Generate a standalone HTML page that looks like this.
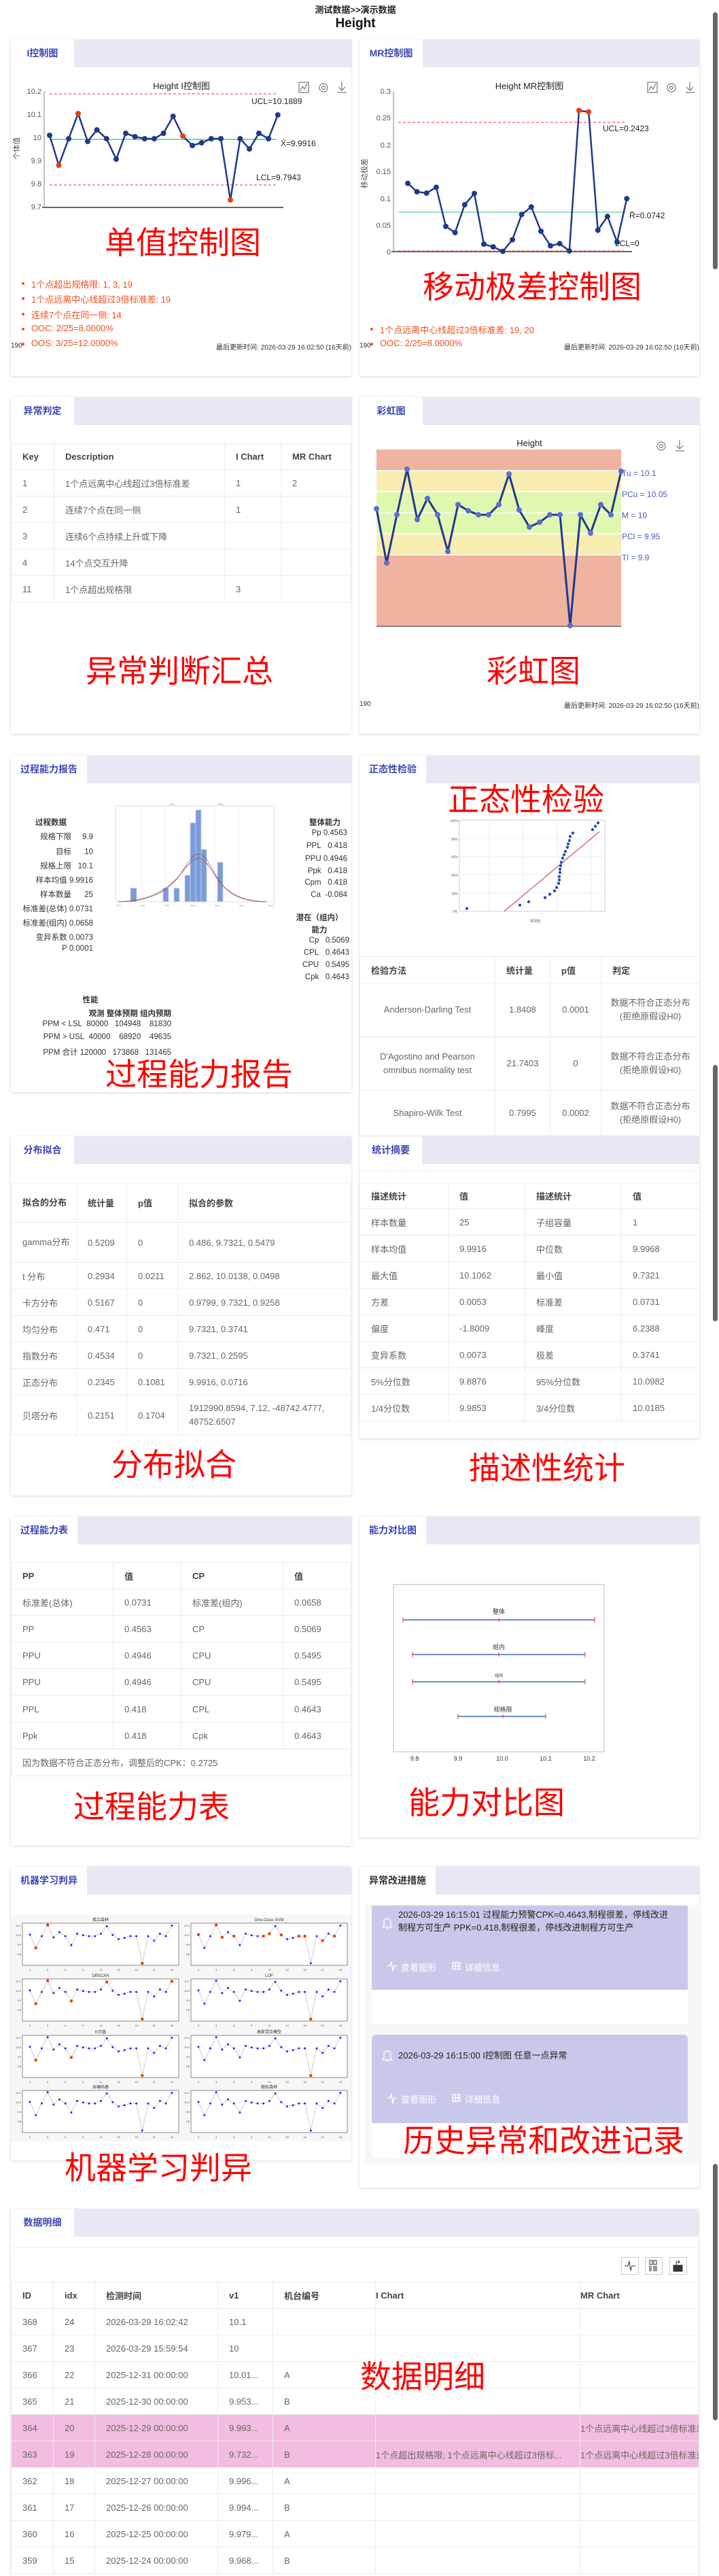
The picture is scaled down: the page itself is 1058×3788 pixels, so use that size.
<!DOCTYPE html>
<html><head><meta charset="utf-8">
<style>
*{box-sizing:border-box;margin:0;padding:0}
body{width:1058px;height:3783px;position:relative;overflow:hidden;background:#fff;font-family:"Liberation Sans","Noto Sans CJK SC",sans-serif;color:#555;font-size:13px}
.a{position:absolute}
.panel{position:absolute;background:#fff;box-shadow:0 1px 4px rgba(0,0,0,.16)}
.tabbar{position:absolute;left:0;top:0;right:0;height:41px;background:#e8e8f4}
.tab{position:absolute;left:0;top:0;height:41px;line-height:41px;background:#fff;font-weight:bold;color:#3c46b4;font-size:14px;text-align:center}
table{position:absolute;border-collapse:collapse;table-layout:fixed;font-size:13px;color:#666}
td,th{border:1px solid #ececec;padding:0 0 0 16px;text-align:left;vertical-align:middle;font-weight:normal;overflow:hidden;white-space:nowrap}
th{font-weight:bold;color:#444}
.red{position:absolute;color:#f00;font-size:46px;line-height:46px;white-space:nowrap;font-family:"Liberation Sans","Noto Sans CJK SC",sans-serif}
.bl{position:absolute;color:#f0501e;font-size:13px;white-space:nowrap}
.bl:before{content:"";position:absolute;left:-14px;top:7px;width:4px;height:4px;border-radius:2px;background:#f0501e}
.sm{position:absolute;font-size:10px;color:#333;white-space:nowrap}
.cr td{text-align:center;padding:0 6px;white-space:normal;line-height:20px}
.pr{position:absolute;font-size:11.5px;color:#333;white-space:nowrap;text-align:right}
.card{position:absolute;left:547px;width:465px;background:#c8c9ea}
.ct{position:absolute;left:39px;font-size:13px;color:#222;line-height:19px;width:410px}
.lk{position:absolute;font-size:13px;color:#eef;font-weight:bold}
.pink td{background:#f2bde0}
</style></head><body>

<div class="a" style="left:0;width:1046px;top:4px;text-align:center;font-weight:bold;font-size:13px;color:#222">测试数据&gt;&gt;演示数据</div>
<div class="a" style="left:0;width:1046px;top:24px;text-align:center;font-weight:bold;font-size:19px;color:#111">Height</div>

<!-- scrollbar -->
<div class="a" style="left:1049px;top:18px;width:7px;height:378px;background:#666;border-radius:4px"></div>
<div class="a" style="left:1049px;top:1566px;width:7px;height:377px;background:#666;border-radius:4px"></div>
<div class="a" style="left:1049px;top:3182px;width:7px;height:377px;background:#666;border-radius:4px"></div>

<!-- Row 1 -->
<div class="panel" style="left:16px;top:58px;width:501px;height:495px"><div class="tabbar"></div><div class="tab" style="width:93px">I控制图</div></div>
<div class="panel" style="left:529px;top:58px;width:500px;height:495px"><div class="tabbar"></div><div class="tab" style="width:93px">MR控制图</div></div>
<div class="bl" style="left:46px;top:408px">1个点超出规格限: 1, 3, 19</div>
<div class="bl" style="left:46px;top:430px">1个点远离中心线超过3倍标准差: 19</div>
<div class="bl" style="left:46px;top:453px">连续7个点在同一侧: 14</div>
<div class="bl" style="left:46px;top:475px">OOC: 2/25=8.0000%</div>
<div class="bl" style="left:46px;top:497px">OOS: 3/25=12.0000%</div>
<div class="sm" style="left:16px;top:503px">190</div>
<div class="sm" style="left:300px;width:217px;text-align:right;top:502px">最后更新时间: 2026-03-29 16:02:50 (16天前)</div>
<div class="bl" style="left:559px;top:475px">1个点远离中心线超过3倍标准差: 19, 20</div>
<div class="bl" style="left:559px;top:497px">OOC: 2/25=8.0000%</div>
<div class="sm" style="left:529px;top:503px">190</div>
<div class="sm" style="left:812px;width:217px;text-align:right;top:502px">最后更新时间: 2026-03-29 16:02:50 (16天前)</div>

<!-- Row 2 -->
<div class="panel" style="left:16px;top:584px;width:501px;height:495px"><div class="tabbar"></div><div class="tab" style="width:93px">异常判定</div></div>
<div class="panel" style="left:529px;top:584px;width:500px;height:495px"><div class="tabbar"></div><div class="tab" style="width:93px">彩虹图</div></div>
<table style="left:16px;top:652px;width:500px">
<colgroup><col style="width:63px"><col style="width:251px"><col style="width:83px"><col style="width:103px"></colgroup>
<tr style="height:38px"><th>Key</th><th>Description</th><th>I Chart</th><th>MR Chart</th></tr>
<tr style="height:39px"><td>1</td><td>1个点远离中心线超过3倍标准差</td><td>1</td><td>2</td></tr>
<tr style="height:39px"><td>2</td><td>连续7个点在同一侧</td><td>1</td><td></td></tr>
<tr style="height:39px"><td>3</td><td>连续6个点持续上升或下降</td><td></td><td></td></tr>
<tr style="height:39px"><td>4</td><td>14个点交互升降</td><td></td><td></td></tr>
<tr style="height:39px"><td>11</td><td>1个点超出规格限</td><td>3</td><td></td></tr>
</table>
<div class="sm" style="left:529px;top:1030px">190</div>
<div class="sm" style="left:812px;width:217px;text-align:right;top:1029px">最后更新时间: 2026-03-29 16:02:50 (16天前)</div>

<!-- Row 3 -->
<div class="panel" style="left:16px;top:1111px;width:501px;height:495px"><div class="tabbar"></div><div class="tab" style="width:112px">过程能力报告</div></div>
<div class="panel" style="left:529px;top:1111px;width:500px;height:560px"><div class="tabbar"></div><div class="tab" style="width:98px">正态性检验</div></div>

<div class="pr" style="left:40px;width:70px;top:1201px;text-align:center;font-weight:bold">过程数据</div>
<div class="pr" style="left:20px;width:117px;top:1222px">规格下限&nbsp;&nbsp;&nbsp;&nbsp; 9.9</div>
<div class="pr" style="left:20px;width:117px;top:1244px">目标&nbsp;&nbsp;&nbsp;&nbsp;&nbsp; 10</div>
<div class="pr" style="left:20px;width:117px;top:1265px">规格上限&nbsp;&nbsp; 10.1</div>
<div class="pr" style="left:20px;width:117px;top:1286px">样本均值 9.9916</div>
<div class="pr" style="left:20px;width:117px;top:1307px">样本数量&nbsp;&nbsp;&nbsp;&nbsp;&nbsp; 25</div>
<div class="pr" style="left:20px;width:117px;top:1328px">标准差(总体) 0.0731</div>
<div class="pr" style="left:20px;width:117px;top:1349px">标准差(组内) 0.0658</div>
<div class="pr" style="left:20px;width:117px;top:1370px">变异系数 0.0073</div>
<div class="pr" style="left:20px;width:117px;top:1389px">P 0.0001</div>

<div class="pr" style="left:445px;width:66px;top:1201px;text-align:center;font-weight:bold">整体能力</div>
<div class="pr" style="left:420px;width:91px;top:1219px">Pp 0.4563</div>
<div class="pr" style="left:420px;width:91px;top:1238px">PPL&nbsp;&nbsp; 0.418</div>
<div class="pr" style="left:420px;width:91px;top:1257px">PPU 0.4946</div>
<div class="pr" style="left:420px;width:91px;top:1275px">Ppk&nbsp;&nbsp; 0.418</div>
<div class="pr" style="left:420px;width:91px;top:1292px">Cpm&nbsp;&nbsp; 0.418</div>
<div class="pr" style="left:420px;width:91px;top:1310px">Ca&nbsp; -0.084</div>
<div class="pr" style="left:430px;width:80px;top:1341px;text-align:center;font-weight:bold">潜在（组内）</div>
<div class="pr" style="left:430px;width:80px;top:1359px;text-align:center;font-weight:bold">能力</div>
<div class="pr" style="left:420px;width:94px;top:1377px">Cp&nbsp;&nbsp; 0.5069</div>
<div class="pr" style="left:420px;width:94px;top:1395px">CPL&nbsp;&nbsp; 0.4643</div>
<div class="pr" style="left:420px;width:94px;top:1413px">CPU&nbsp;&nbsp; 0.5495</div>
<div class="pr" style="left:420px;width:94px;top:1431px">Cpk&nbsp;&nbsp; 0.4643</div>

<div class="pr" style="left:118px;width:30px;top:1462px;text-align:center;font-weight:bold">性能</div>
<div class="pr" style="left:120px;width:132px;top:1482px;font-weight:bold">观测 整体预期 组内预期</div>
<div class="pr" style="left:36px;width:216px;top:1500px">PPM &lt; LSL&nbsp; 80000&nbsp;&nbsp; 104948&nbsp;&nbsp;&nbsp; 81830</div>
<div class="pr" style="left:36px;width:216px;top:1519px">PPM &gt; USL&nbsp; 40000&nbsp;&nbsp;&nbsp; 68920&nbsp;&nbsp;&nbsp; 49635</div>
<div class="pr" style="left:36px;width:216px;top:1539px">PPM 合计 120000&nbsp;&nbsp; 173868&nbsp;&nbsp; 131465</div>

<table class="cr" style="left:529px;top:1406px;width:500px">
<colgroup><col style="width:199px"><col style="width:81px"><col style="width:75px"><col style="width:145px"></colgroup>
<tr style="height:39px"><th style="padding-left:16px;text-align:left">检验方法</th><th style="padding-left:16px;text-align:left">统计量</th><th style="padding-left:16px;text-align:left">p值</th><th style="padding-left:16px;text-align:left">判定</th></tr>
<tr style="height:79px"><td>Anderson-Darling Test</td><td>1.8408</td><td>0.0001</td><td>数据不符合正态分布 (拒绝原假设H0)</td></tr>
<tr style="height:79px"><td>D'Agostino and Pearson omnibus normality test</td><td>21.7403</td><td>0</td><td>数据不符合正态分布 (拒绝原假设H0)</td></tr>
<tr style="height:67px"><td>Shapiro-Wilk Test</td><td>0.7995</td><td>0.0002</td><td>数据不符合正态分布 (拒绝原假设H0)</td></tr>
</table>

<!-- Row 4 -->
<div class="panel" style="left:16px;top:1671px;width:501px;height:528px"><div class="tabbar"></div><div class="tab" style="width:93px">分布拟合</div></div>
<div class="panel" style="left:529px;top:1671px;width:500px;height:444px"><div class="tabbar"></div><div class="tab" style="width:92px">统计摘要</div><div class="a" style="left:0;right:0;top:50px;border-top:1px solid #ececec"></div></div>
<table style="left:16px;top:1739px;width:500px">
<colgroup><col style="width:96px"><col style="width:74px"><col style="width:75px"><col style="width:255px"></colgroup>
<tr style="height:58px"><th style="white-space:normal;line-height:20px">拟合的分布</th><th>统计量</th><th>p值</th><th>拟合的参数</th></tr>
<tr style="height:59px"><td style="white-space:normal;line-height:20px">gamma分布</td><td>0.5209</td><td>0</td><td>0.486, 9.7321, 0.5479</td></tr>
<tr style="height:39px"><td>t 分布</td><td>0.2934</td><td>0.0211</td><td>2.862, 10.0138, 0.0498</td></tr>
<tr style="height:39px"><td>卡方分布</td><td>0.5167</td><td>0</td><td>0.9799, 9.7321, 0.9258</td></tr>
<tr style="height:39px"><td>均匀分布</td><td>0.471</td><td>0</td><td>9.7321, 0.3741</td></tr>
<tr style="height:39px"><td>指数分布</td><td>0.4534</td><td>0</td><td>9.7321, 0.2595</td></tr>
<tr style="height:39px"><td>正态分布</td><td>0.2345</td><td>0.1081</td><td>9.9916, 0.0716</td></tr>
<tr style="height:59px"><td>贝塔分布</td><td>0.2151</td><td>0.1704</td><td style="white-space:normal;line-height:20px">1912990.8594, 7.12, -48742.4777, 48752.6507</td></tr>
</table>
<table style="left:529px;top:1739px;width:500px">
<colgroup><col style="width:130px"><col style="width:113px"><col style="width:142px"><col style="width:115px"></colgroup>
<tr style="height:38px"><th>描述统计</th><th>值</th><th>描述统计</th><th>值</th></tr>
<tr style="height:39px"><td>样本数量</td><td>25</td><td>子组容量</td><td>1</td></tr>
<tr style="height:39px"><td>样本均值</td><td>9.9916</td><td>中位数</td><td>9.9968</td></tr>
<tr style="height:39px"><td>最大值</td><td>10.1062</td><td>最小值</td><td>9.7321</td></tr>
<tr style="height:39px"><td>方差</td><td>0.0053</td><td>标准差</td><td>0.0731</td></tr>
<tr style="height:39px"><td>偏度</td><td>-1.8009</td><td>峰度</td><td>6.2388</td></tr>
<tr style="height:39px"><td>变异系数</td><td>0.0073</td><td>极差</td><td>0.3741</td></tr>
<tr style="height:39px"><td>5%分位数</td><td>9.8876</td><td>95%分位数</td><td>10.0982</td></tr>
<tr style="height:39px"><td>1/4分位数</td><td>9.9853</td><td>3/4分位数</td><td>10.0185</td></tr>
</table>

<!-- Row 5 -->
<div class="panel" style="left:16px;top:2230px;width:501px;height:484px"><div class="tabbar"></div><div class="tab" style="width:98px">过程能力表</div></div>
<div class="panel" style="left:529px;top:2230px;width:500px;height:472px"><div class="tabbar"></div><div class="tab" style="width:98px">能力对比图</div></div>
<table style="left:16px;top:2297px;width:500px">
<colgroup><col style="width:150px"><col style="width:100px"><col style="width:150px"><col style="width:100px"></colgroup>
<tr style="height:39px"><th>PP</th><th>值</th><th>CP</th><th>值</th></tr>
<tr style="height:39px"><td>标准差(总体)</td><td>0.0731</td><td>标准差(组内)</td><td>0.0658</td></tr>
<tr style="height:39px"><td>PP</td><td>0.4563</td><td>CP</td><td>0.5069</td></tr>
<tr style="height:39px"><td>PPU</td><td>0.4946</td><td>CPU</td><td>0.5495</td></tr>
<tr style="height:40px"><td>PPU</td><td>0.4946</td><td>CPU</td><td>0.5495</td></tr>
<tr style="height:39px"><td>PPL</td><td>0.418</td><td>CPL</td><td>0.4643</td></tr>
<tr style="height:39px"><td>Ppk</td><td>0.418</td><td>Cpk</td><td>0.4643</td></tr>
<tr style="height:40px"><td colspan="4">因为数据不符合正态分布，调整后的CPK：0.2725</td></tr>
</table>

<!-- Row 6 -->
<div class="panel" style="left:16px;top:2745px;width:501px;height:432px"><div class="tabbar"></div><div class="tab" style="width:112px">机器学习判异</div></div>
<div class="panel" style="left:529px;top:2745px;width:500px;height:472px"><div class="tabbar"></div><div class="tab" style="width:112px;color:#333">异常改进措施</div></div>
<div class="a" style="left:16px;top:2816px;width:501px;height:333px;background:#f7f7f7"></div>
<div class="a" style="left:537px;top:2801px;width:491px;height:382px;background:#f7f7f7"></div>
<div class="a" style="left:547px;top:2926px;width:465px;height:50px;background:#fff"></div>
<div class="a" style="left:547px;top:3122px;width:465px;height:51px;background:#fff"></div>
<div class="card" style="top:2802px;height:124px">
<div class="ct" style="top:4px">2026-03-29 16:15:01 过程能力预警CPK=0.4643,制程很差，停线改进制程方可生产 PPK=0.418,制程很差，停线改进制程方可生产</div>
<div class="lk" style="left:43px;top:81px">查看图形</div><div class="lk" style="left:137px;top:81px">详细信息</div>
</div>
<div class="card" style="top:2992px;height:130px;border-radius:6px 6px 0 0">
<div class="ct" style="top:21px">2026-03-29 16:15:00 I控制图 任意一点异常</div>
<div class="lk" style="left:43px;top:85px">查看图形</div><div class="lk" style="left:137px;top:85px">详细信息</div>
</div>

<!-- Row 7 -->
<div class="panel" style="left:16px;top:3248px;width:1012px;height:540px"><div class="tabbar"></div><div class="tab" style="width:93px">数据明细</div><div class="a" style="left:0;right:0;top:57px;border-top:1px solid #ececec"></div></div>
<div class="a" style="left:914px;top:3319px;width:26px;height:26px;border:1px solid #ccc;background:#fff"></div>
<div class="a" style="left:949px;top:3319px;width:26px;height:26px;border:1px solid #ccc;background:#fff"></div>
<div class="a" style="left:985px;top:3319px;width:26px;height:26px;border:1px solid #ccc;background:#fff"></div>
<table style="left:16px;top:3355px;width:1012px">
<colgroup><col style="width:62px"><col style="width:61px"><col style="width:181px"><col style="width:81px"><col style="width:151px"><col style="width:301px"><col style="width:175px"></colgroup>
<tr style="height:39px"><th>ID</th><th>idx</th><th>检测时间</th><th>v1</th><th>机台编号</th><th style="padding-left:0">I Chart</th><th style="padding-left:0">MR Chart</th></tr>
<tr style="height:39px"><td>368</td><td>24</td><td>2026-03-29 16:02:42</td><td>10.1</td><td></td><td></td><td></td></tr>
<tr style="height:39px"><td>367</td><td>23</td><td>2026-03-29 15:59:54</td><td>10</td><td></td><td></td><td></td></tr>
<tr style="height:39px"><td>366</td><td>22</td><td>2025-12-31 00:00:00</td><td>10.01...</td><td>A</td><td></td><td></td></tr>
<tr style="height:39px"><td>365</td><td>21</td><td>2025-12-30 00:00:00</td><td>9.953...</td><td>B</td><td></td><td></td></tr>
<tr class="pink" style="height:39px"><td>364</td><td>20</td><td>2025-12-29 00:00:00</td><td>9.993...</td><td>A</td><td></td><td style="padding-left:0">1个点远离中心线超过3倍标准差</td></tr>
<tr class="pink" style="height:39px"><td>363</td><td>19</td><td>2025-12-28 00:00:00</td><td>9.732...</td><td>B</td><td style="padding-left:0">1个点超出规格限; 1个点远离中心线超过3倍标...</td><td style="padding-left:0">1个点远离中心线超过3倍标准差</td></tr>
<tr style="height:39px"><td>362</td><td>18</td><td>2025-12-27 00:00:00</td><td>9.996...</td><td>A</td><td></td><td></td></tr>
<tr style="height:39px"><td>361</td><td>17</td><td>2025-12-26 00:00:00</td><td>9.994...</td><td>B</td><td></td><td></td></tr>
<tr style="height:39px"><td>360</td><td>16</td><td>2025-12-25 00:00:00</td><td>9.979...</td><td>A</td><td></td><td></td></tr>
<tr style="height:39px"><td>359</td><td>15</td><td>2025-12-24 00:00:00</td><td>9.968...</td><td>B</td><td></td><td></td></tr>
</table>

<!-- Overlay graphics -->
<svg class="a" id="ov" style="left:0;top:0" width="1058" height="3783" font-family="Liberation Sans, Noto Sans CJK SC, sans-serif">
<!-- I chart -->
<g font-size="11" fill="#555">
<text x="267" y="131" text-anchor="middle" font-size="13" fill="#222">Height I控制图</text>
<text x="61" y="138" text-anchor="end">10.2</text><text x="61" y="172" text-anchor="end">10.1</text><text x="61" y="206" text-anchor="end">10</text><text x="61" y="240" text-anchor="end">9.9</text><text x="61" y="274" text-anchor="end">9.8</text><text x="61" y="308" text-anchor="end">9.7</text>
<text transform="translate(28,218) rotate(-90)" text-anchor="middle" font-size="11">个体值</text>
</g>
<line x1="65" y1="134" x2="65" y2="305" stroke="#888"/>
<line x1="62" y1="305" x2="417" y2="305" stroke="#666" stroke-width="2"/>
<line x1="73" y1="138" x2="407" y2="138" stroke="#e33" stroke-dasharray="4,3"/>
<line x1="73" y1="272" x2="407" y2="272" stroke="#e33" stroke-dasharray="4,3"/>
<line x1="73" y1="205" x2="407" y2="205" stroke="#7fd6a8" stroke-width="2"/>
<g font-size="12" fill="#222"><text x="370" y="153">UCL=10.1889</text><text x="413" y="215">X̄=9.9916</text><text x="377" y="265">LCL=9.7943</text></g>
<polyline id="ic" fill="none" stroke="#1f3a8a" stroke-width="2.5" points="73,199 86.5,243 101,204 115,167 129,208 142.6,191 156.8,204 171,234 185,196 198.6,201 212.8,204 227,204 240.5,196 254.7,171 269,200 283,214 296.6,210 310.8,204 325,204 339,294 353.4,204 367,219 381,196 395,204 408.8,169"/>
<!-- MR chart -->
<g font-size="11" fill="#555">
<text x="779" y="131" text-anchor="middle" font-size="13" fill="#222">Height MR控制图</text>
<text x="575" y="138" text-anchor="end">0.3</text><text x="575" y="177" text-anchor="end">0.25</text><text x="575" y="217" text-anchor="end">0.2</text><text x="575" y="256" text-anchor="end">0.15</text><text x="575" y="296" text-anchor="end">0.1</text><text x="575" y="335" text-anchor="end">0.05</text><text x="575" y="374" text-anchor="end">0</text>
<text transform="translate(540,255) rotate(-90)" text-anchor="middle" font-size="11">移动极差</text>
</g>
<line x1="579" y1="134" x2="579" y2="370" stroke="#888"/>
<line x1="576" y1="370" x2="930" y2="370" stroke="#666" stroke-width="2"/>
<line x1="586" y1="180" x2="920" y2="180" stroke="#e33" stroke-dasharray="4,3"/>
<line x1="586" y1="369" x2="920" y2="369" stroke="#e33" stroke-dasharray="4,3"/>
<line x1="586" y1="312" x2="920" y2="312" stroke="#7fd6a8" stroke-width="1.5"/>
<g font-size="12" fill="#222"><text x="887" y="193">UCL=0.2423</text><text x="926" y="321">R̄=0.0742</text><text x="905" y="362">LCL=0</text></g>
<polyline id="mc" fill="none" stroke="#1f3a8a" stroke-width="2.5" points="600,269.6 613.5,282 627.7,284 641.9,275.4 656,332.9 669.6,342 683.8,301 698,284.6 712,359 725.7,363 740,369.6 754,352.5 767.6,315.4 781.8,304.3 796,340 810,361.4 823.6,358.2 837.8,369 852,162.5 866.2,164.6 879.7,338.6 893.9,318.2 908,356 922.3,292.1"/>
<!-- chart icons -->
<g fill="none" stroke="#777" stroke-width="1.2">
<rect x="440" y="121" width="14" height="15"/><polyline points="442,133 445,127 448,131 452,123"/>
<circle cx="476" cy="129" r="6"/><circle cx="476" cy="129" r="2.5"/>
<path d="M503 120v13M498 128l5 5 5-5M497 136h13"/>
<rect x="953" y="121" width="14" height="15"/><polyline points="955,133 958,127 961,131 965,123"/>
<circle cx="988" cy="129" r="6"/><circle cx="988" cy="129" r="2.5"/>
<path d="M1015 120v13M1010 128l5 5 5-5M1009 136h13"/>
<circle cx="973" cy="656" r="6"/><circle cx="973" cy="656" r="2.5"/>
<path d="M1000 647v13M995 655l5 5 5-5M994 663h13"/>
</g>
<!-- Rainbow -->
<text x="779" y="656" text-anchor="middle" font-size="13" fill="#222">Height</text>
<rect x="554" y="661" width="360" height="31" fill="#efb3a0"/>
<rect x="554" y="692" width="360" height="31" fill="#f7edb0"/>
<rect x="554" y="723" width="360" height="62" fill="#e0f7b0"/>
<rect x="554" y="785" width="360" height="31" fill="#f7edb0"/>
<rect x="554" y="816" width="360" height="105" fill="#efb3a0"/>
<g stroke="#fff" stroke-width="1.5"><line x1="554" y1="692" x2="914" y2="692"/><line x1="554" y1="723" x2="914" y2="723"/><line x1="554" y1="754" x2="914" y2="754"/><line x1="554" y1="785" x2="914" y2="785"/><line x1="554" y1="816" x2="914" y2="816"/></g>
<line x1="554" y1="921" x2="914" y2="921" stroke="#666" stroke-width="1.5"/>
<g font-size="12" fill="#4a5fc1"><text x="915" y="700">Tu = 10.1</text><text x="915" y="731">PCu = 10.05</text><text x="915" y="762">M = 10</text><text x="915" y="793">PCl = 9.95</text><text x="915" y="824">Tl = 9.9</text></g>
<polyline id="rc" fill="none" stroke="#1f3a8a" stroke-width="3" points="554,748 569,828 584,757 599,690 614,764 629,733 644,757 659,811 674,742 689,751 704,757 719,757 734,742 749,697 764,750 779,775 794,768 809,757 824,757 839,920 854,757 869,784 884,742 899,757 914,693"/>
<!-- Histogram -->
<rect x="170" y="1185" width="233" height="141" fill="#fff" stroke="#ddd"/>
<g stroke="#eee"><line x1="207" y1="1185" x2="207" y2="1326"/><line x1="243" y1="1185" x2="243" y2="1326"/><line x1="280" y1="1185" x2="280" y2="1326"/><line x1="316" y1="1185" x2="316" y2="1326"/><line x1="352" y1="1185" x2="352" y2="1326"/></g>
<g fill="#7b9bd8" stroke="#c8d4ee" stroke-width=".8">
<rect x="192" y="1306" width="9" height="20"/><rect x="240" y="1306" width="8" height="20"/><rect x="256" y="1306" width="8" height="20"/><rect x="272" y="1287" width="8" height="39"/><rect x="280" y="1210" width="8" height="116"/><rect x="288" y="1191" width="8" height="135"/><rect x="296" y="1249" width="8" height="77"/><rect x="320" y="1268" width="8" height="58"/>
</g>
<path d="M174 1326 C230 1325 255 1300 270 1280 C282 1265 288 1262 292 1262 C298 1262 305 1268 315 1285 C330 1310 350 1325 392 1326" fill="none" stroke="#b55" stroke-width="1"/>
<path d="M174 1326 C235 1326 258 1300 272 1275 C283 1258 288 1256 292 1256 C298 1256 305 1262 315 1282 C330 1312 350 1326 392 1326" fill="none" stroke="#555" stroke-width=".8" stroke-dasharray="2,1"/>
<g font-size="4" fill="#777"><text x="172" y="1333">9.7</text><text x="207" y="1333">9.8</text><text x="243" y="1333">9.9</text><text x="280" y="1333">10.0</text><text x="316" y="1333">10.1</text><text x="352" y="1333">10.2</text><text x="395" y="1333">10.3</text><text x="250" y="1184" fill="#b55">LSL</text><text x="321" y="1184" fill="#b55">USL</text></g>
<!-- Normality -->
<rect x="676" y="1206" width="214" height="134" fill="#fff" stroke="#ccc"/>
<g stroke="#eee"><line x1="676" y1="1233" x2="890" y2="1233"/><line x1="676" y1="1260" x2="890" y2="1260"/><line x1="676" y1="1286" x2="890" y2="1286"/><line x1="676" y1="1313" x2="890" y2="1313"/><line x1="720" y1="1206" x2="720" y2="1340"/><line x1="770" y1="1206" x2="770" y2="1340"/><line x1="820" y1="1206" x2="820" y2="1340"/><line x1="870" y1="1206" x2="870" y2="1340"/></g>
<line x1="742" y1="1340" x2="882" y2="1223" stroke="#b33" stroke-width="1"/>
<g id="nd" fill="#2a4fb0"></g>
<g font-size="5" fill="#666"><text x="662" y="1209">100%</text><text x="664" y="1236">80%</text><text x="664" y="1262">60%</text><text x="664" y="1289">40%</text><text x="664" y="1316">20%</text><text x="666" y="1342">0%</text><text x="780" y="1356">观测值</text></g>
<!-- Capability comparison -->
<rect x="579" y="2330" width="310" height="246" fill="#fff" stroke="#bbb"/>
<g stroke="#3a6ab8" stroke-width="1.5"><line x1="593" y1="2382" x2="875" y2="2382"/><line x1="607" y1="2433" x2="861" y2="2433"/><line x1="607" y1="2473" x2="861" y2="2473"/><line x1="674" y1="2524" x2="803" y2="2524"/></g>
<g stroke="#e33" stroke-width="1"><line x1="593" y1="2378" x2="593" y2="2386"/><line x1="875" y1="2378" x2="875" y2="2386"/><line x1="734" y1="2379" x2="734" y2="2385"/><line x1="607" y1="2429" x2="607" y2="2437"/><line x1="861" y1="2429" x2="861" y2="2437"/><line x1="734" y1="2430" x2="734" y2="2436"/><line x1="607" y1="2469" x2="607" y2="2477"/><line x1="861" y1="2469" x2="861" y2="2477"/><line x1="734" y1="2470" x2="734" y2="2476"/><line x1="674" y1="2520" x2="674" y2="2528"/><line x1="803" y1="2520" x2="803" y2="2528"/><line x1="740" y1="2521" x2="740" y2="2527"/></g>
<g font-size="9" fill="#333" text-anchor="middle"><text x="734" y="2373">整体</text><text x="734" y="2425">组内</text><text x="734" y="2466" font-size="6">组间</text><text x="740" y="2517">规格限</text>
<text x="610" y="2589">9.8</text><text x="674" y="2589">9.9</text><text x="739" y="2589">10.0</text><text x="803" y="2589">10.1</text><text x="867" y="2589">10.2</text></g>
<!-- ML -->
<g id="ml"></g>
<!-- Card icons -->
<g fill="none" stroke="#fff" stroke-width="1.3">
<path d="M565 2832v-6a5 5 0 0 1 10 0v6l2 2h-14z M568 2836h4"/>
<path d="M565 3027v-6a5 5 0 0 1 10 0v6l2 2h-14z M568 3031h4"/>
<polyline points="570,2891 574,2891 576,2885 578,2899 580,2891 584,2891"/>
<rect x="666" y="2886" width="11" height="10"/><path d="M666 2891h11M670 2886v10M674 2886v10"/>
<polyline points="570,3085 574,3085 576,3079 578,3093 580,3085 584,3085"/>
<rect x="666" y="3080" width="11" height="10"/><path d="M666 3085h11M670 3080v10M674 3080v10"/>
</g>
<!-- toolbar icons -->
<g fill="none" stroke="#333" stroke-width="1">
<polyline points="919,3332 924,3332 926,3325 928,3339 930,3332 935,3332"/>
<rect x="956" y="3324" width="4" height="6"/><rect x="962" y="3324" width="4" height="6"/><path d="M956 3332v8M958 3332v8M962 3332v8M964 3332v8M966 3332v8"/>
<rect x="991" y="3331" width="13" height="9" fill="#333"/><path d="M995 3331v-5h5M998 3324l2 2-2 2"/>
</g>
</svg>

<div class="red" style="left:154px;top:334px">单值控制图</div>
<div class="red" style="left:622px;top:399px">移动极差控制图</div>
<div class="red" style="left:126px;top:964px">异常判断汇总</div>
<div class="red" style="left:716px;top:964px">彩虹图</div>
<div class="red" style="left:155px;top:1557px">过程能力报告</div>
<div class="red" style="left:659px;top:1153px">正态性检验</div>
<div class="red" style="left:164px;top:2131px">分布拟合</div>
<div class="red" style="left:690px;top:2136px">描述性统计</div>
<div class="red" style="left:108px;top:2634px">过程能力表</div>
<div class="red" style="left:601px;top:2628px">能力对比图</div>
<div class="red" style="left:95px;top:3165px">机器学习判异</div>
<div class="red" style="left:593px;top:3125px">历史异常和改进记录</div>
<div class="red" style="left:530px;top:3472px">数据明细</div>

<script>
(function(){
var NS="http://www.w3.org/2000/svg",ov=document.getElementById("ov");
function el(t,a,p){var e=document.createElementNS(NS,t);for(var k in a)e.setAttribute(k,a[k]);(p||ov).appendChild(e);return e;}
function pts(id){return document.getElementById(id).getAttribute("points").trim().split(/\s+/).map(function(s){return s.split(",").map(Number);});}
function dots(id,r,col,red,rcol){pts(id).forEach(function(p,i){el("circle",{cx:p[0],cy:p[1],r:r,fill:red.indexOf(i)>=0?rcol:col});});}
dots("ic",4,"#1f3a8a",[1,3,14,19],"#e8400c");
dots("mc",4,"#1f3a8a",[18,19],"#e8400c");
dots("rc",4,"#5b6fd0",[],"");
var nd=[[687,1336],[765,1331],[778,1326],[802,1320],[809,1315],[816,1310],[819,1305],[822,1299],[823,1294],[823,1289],[824,1283],[824,1278],[825,1273],[826,1268],[828,1262],[830,1257],[832,1252],[835,1246],[836,1241],[838,1236],[839,1230],[843,1225],[872,1220],[876,1215],[880,1210]];
var g=document.getElementById("nd");nd.forEach(function(p){el("circle",{cx:p[0],cy:p[1],r:2.2},g);});
var yI=[199,243,204,167,208,191,204,234,196,201,204,204,196,171,200,214,210,204,204,294,204,219,196,204,169];
var names=["孤立森林","One-Class SVM","DBSCAN","LOF","K均值","高斯混合模型","自编码器","随机森林"];
var reds=[[1,3,19],[0,3,4,6,11,12,14,17,18,21,23],[1,3,7,13,19,24],[19],[1,7,19],[19],[],[]];
var tops=[2828,2910,2993,3074],ml=document.getElementById("ml");
for(var k=0;k<8;k++){var L=k%2?281:33,T=tops[k>>1];
el("rect",{x:L,y:T,width:230,height:62,fill:"#fff",stroke:"#888","stroke-width":1},ml);
var t=el("text",{x:L+115,y:T-3,"font-size":"6","text-anchor":"middle",fill:"#333"},ml);t.textContent=names[k];
var P=yI.map(function(y,i){return [L+11+i*8.7,T-12+(y-134)*0.444];});
el("polyline",{points:P.map(function(p){return p.join(",")}).join(" "),fill:"none",stroke:"#ccc","stroke-width":1},ml);
P.forEach(function(p,i){var r=reds[k].indexOf(i)>=0;el("circle",{cx:p[0],cy:p[1],r:r?2.2:1.5,fill:r?"#e8400c":"#22f"},ml);});
["10.1","10.0","9.9","9.8"].forEach(function(s,j){var tt=el("text",{x:L-2,y:T+5+j*14,"font-size":"4","text-anchor":"end",fill:"#444"},ml);tt.textContent=s;});
[0,3,6,9,12,15,18,21,24].forEach(function(v){var tt=el("text",{x:L+11+v*8.7,y:T+70,"font-size":"4","text-anchor":"middle",fill:"#444"},ml);tt.textContent=v;});
}
})();
</script>
</body></html>
